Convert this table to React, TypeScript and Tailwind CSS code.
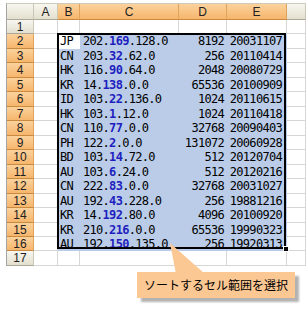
import React from "react";

const rows: [string, string, string, string, string, string][] = [
  ["JP", "202", "169", "128.0", "8192", "20031107"],
  ["CN", "203", "32", "62.0", "256", "20110414"],
  ["HK", "116", "90", "64.0", "2048", "20080729"],
  ["KR", "14", "138", "0.0", "65536", "20100909"],
  ["ID", "103", "22", "136.0", "1024", "20110615"],
  ["HK", "103", "1", "12.0", "1024", "20110418"],
  ["CN", "110", "77", "0.0", "32768", "20090403"],
  ["PH", "122", "2", "0.0", "131072", "20060928"],
  ["BD", "103", "14", "72.0", "512", "20120704"],
  ["AU", "103", "6", "24.0", "512", "20120216"],
  ["CN", "222", "83", "0.0", "32768", "20031027"],
  ["AU", "192", "43", "228.0", "256", "19881216"],
  ["KR", "14", "192", "80.0", "4096", "20100920"],
  ["KR", "210", "216", "0.0", "65536", "19990323"],
  ["AU", "192", "150", "135.0", "256", "19920313"],
];

const heights = [15, 14, 15, 14, 15, 14, 15, 14, 15, 14, 15, 14, 15, 14, 14];

const grayHead =
  "bg-gradient-to-b from-[#f7f6f0] to-[#e4e0cf] border-r border-b border-r-[#cbc7b6] border-b-[#aca899] flex items-center justify-center";
const orangeHead =
  "bg-gradient-to-b from-[#fbd29c] to-[#f6b66c] border-r border-b border-r-[#e0a35c] border-b-[#c98a40] flex items-center justify-center";
const cell = "border-r border-b border-[#d6d6d6] bg-white";
const sel = "border-r border-b border-[#bacce7] bg-[#bacce7]";
const mono = "font-['DejaVu_Sans_Mono',monospace] text-[12px] tracking-[-0.7px] text-black leading-none";

export default function App() {
  return (
    <div className="relative w-[306px] h-[310px] bg-white overflow-hidden font-['Liberation_Sans',sans-serif]">
      <div className="pt-[3px] pl-[6px]">
        <div className="border-l border-[#a5a5a5] border-t border-t-[#cfcbba]">
          {/* header row */}
          <div className="flex h-[16px] text-[12px] text-[#222] leading-none">
            <div className={`w-[27px] ${grayHead}`}></div>
            <div className={`w-[24px] ${grayHead}`}>A</div>
            <div className={`w-[22px] ${orangeHead}`}>B</div>
            <div className={`w-[99px] ${orangeHead}`}>C</div>
            <div className={`w-[48px] ${orangeHead}`}>D</div>
            <div className={`w-[60px] ${orangeHead}`}>E</div>
            <div className={`flex-1 ${grayHead}`}></div>
          </div>
          {/* row 1 */}
          <div className="flex h-[14px] text-[12px] text-[#222] leading-none">
            <div className={`w-[27px] ${grayHead}`}>1</div>
            <div className={`w-[24px] ${cell}`}></div>
            <div className={`w-[22px] ${cell}`}></div>
            <div className={`w-[99px] ${cell}`}></div>
            <div className={`w-[48px] ${cell}`}></div>
            <div className={`w-[60px] ${cell}`}></div>
            <div className={`flex-1 ${cell}`}></div>
          </div>
          {rows.map((r, i) => (
            <div
              key={i}
              className={`flex ${heights[i] === 15 ? "h-[15px]" : "h-[14px]"}`}
            >
              <div className={`w-[27px] ${orangeHead} text-[12px] text-[#222] leading-none`}>
                {i + 2}
              </div>
              <div className={`w-[24px] ${cell}`}></div>
              <div
                className={`w-[22px] ${i === 0 ? "border-r border-b border-white bg-white" : sel} flex items-center pl-[2px] ${mono}`}
              >
                {r[0]}
              </div>
              <div className={`w-[99px] ${sel} flex items-center pl-[3px] ${mono} whitespace-nowrap`}>
                {r[1]}.<span className="font-bold text-[#1f1fbf]">{r[2]}</span>.{r[3]}
              </div>
              <div className={`w-[48px] ${sel} flex items-center justify-end pr-[2px] ${mono}`}>
                {r[4]}
              </div>
              <div className={`w-[60px] ${sel} flex items-center justify-end pr-[4px] ${mono}`}>
                {r[5]}
              </div>
              <div className={`flex-1 ${cell}`}></div>
            </div>
          ))}
          {/* row 17 */}
          <div className="flex h-[15px] text-[12px] text-[#222] leading-none">
            <div className={`w-[27px] ${grayHead}`}>17</div>
            <div className={`w-[24px] ${cell}`}></div>
            <div className={`w-[22px] ${cell}`}></div>
            <div className={`w-[99px] ${cell}`}></div>
            <div className={`w-[48px] ${cell}`}></div>
            <div className={`w-[60px] ${cell}`}></div>
            <div className={`flex-1 ${cell}`}></div>
          </div>
        </div>
      </div>

      {/* selection frame */}
      <div className="absolute left-[57px] top-[33px] w-[229px] h-[216px] border-2 border-black pointer-events-none"></div>
      <div className="absolute left-[283px] top-[246px] w-[6px] h-[6px] bg-black border border-white"></div>

      {/* callout pointer */}
      <svg className="absolute left-0 top-0" width="306" height="310" viewBox="0 0 306 310">
        <polygon points="170,243 176,274 205,274" fill="#fbc792" />
      </svg>
      {/* callout */}
      <div className="absolute left-[137px] top-[272px] w-[158px] h-[26px] bg-[#fbc792] shadow-[4px_4px_2px_rgba(0,0,0,0.3)] flex items-center justify-center text-[12px] text-black font-['Noto_Sans_CJK_JP',sans-serif] leading-none">
        ソートするセル範囲を選択
      </div>
    </div>
  );
}
